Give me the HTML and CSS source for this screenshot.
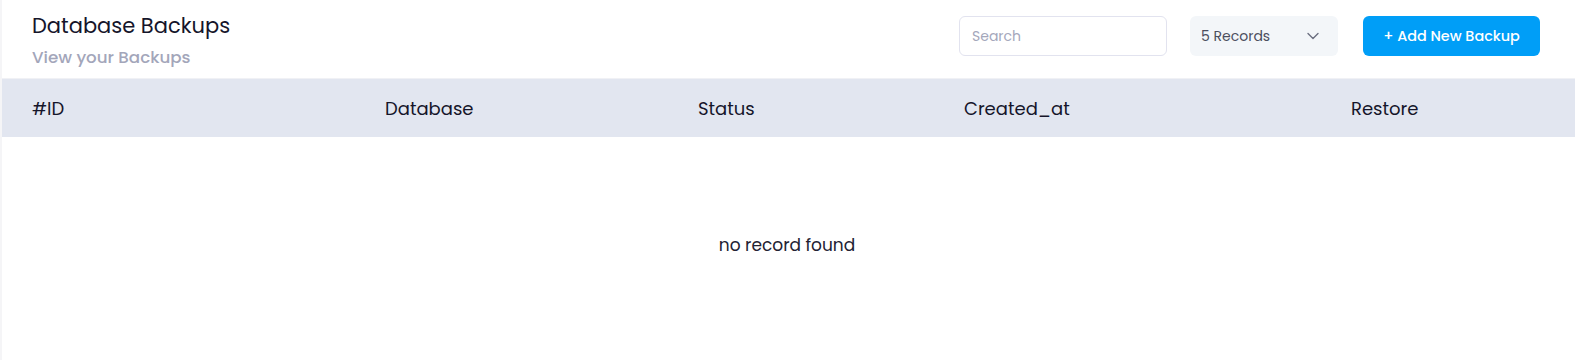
FILE: index.html
```html
<!DOCTYPE html>
<html lang="en">
<head>
  <meta charset="UTF-8">
  <title>Database Backups</title>
  <link rel="stylesheet" href="styles.css">
</head>
<body>
  <div class="card">
    <div class="card-head">
      <div class="titles">
        <h2>Database Backups</h2>
        <p>View your Backups</p>
      </div>
      <div class="tools">
        <input class="search" type="text" placeholder="Search">
        <div class="records">
          <span>5 Records</span>
          <svg width="14" height="14" viewBox="0 0 14 14"><path d="M2 4.5l5 5 5-5" fill="none" stroke="#6b6f80" stroke-width="1.4" stroke-linecap="round" stroke-linejoin="round"/></svg>
        </div>
        <button class="add-btn">+ Add New Backup</button>
      </div>
    </div>

    <div class="table-head">
      <div>#ID</div>
      <div>Database</div>
      <div>Status</div>
      <div>Created_at</div>
      <div>Restore</div>
    </div>
    <div class="empty">no record found</div>
  </div>
</body>
</html>
```

FILE: styles.css
```css
body {
  margin: 0;
  font-family: 'Poppins', 'Open Sans', sans-serif;
  background-color: #fff;
  color: #1b1b2a;
}
.card {
  border-left: 2px solid #f5f5f7;
  min-height: 360px;
}
.card-head {
  display: flex;
  justify-content: space-between;
  align-items: flex-start;
  padding: 11px 35px 0 30px;
  height: 67px;
  border-bottom: 1px solid #f0f1f5;
}
.titles h2 {
  margin: 0;
  font-size: 21px;
  font-weight: 400;
  line-height: 30px;
  color: #15152a;
}
.titles p {
  margin: 3px 0 0;
  font-size: 16.7px;
  font-weight: 500;
  color: #a3a6ba;
}
.tools {
  display: flex;
  align-items: center;
  padding-top: 5px;
}
.search {
  width: 208px;
  height: 40px;
  box-sizing: border-box;
  border: 1px solid #e2e3ef;
  border-radius: 6px;
  padding: 0 12px;
  font-family: inherit;
  font-size: 14px;
  outline: none;
}
.search::placeholder {
  color: #a4a7bb;
}
.records {
  display: flex;
  justify-content: space-between;
  align-items: center;
  width: 148px;
  height: 40px;
  box-sizing: border-box;
  margin-left: 23px;
  padding: 0 18px 0 11px;
  background-color: #f3f6f9;
  border-radius: 6px;
  font-size: 14px;
  color: #4b4e5e;
}
.add-btn {
  margin-left: 25px;
  width: 177px;
  height: 40px;
  border: none;
  border-radius: 6px;
  background-color: #009ef7;
  color: #fff;
  font-family: inherit;
  font-size: 14.4px;
  font-weight: 500;
  cursor: pointer;
}
.table-head {
  display: grid;
  grid-template-columns: 353px 313px 266px 387px 1fr;
  align-items: center;
  height: 58px;
  padding-left: 30px;
  background-color: #e2e6f0;
  font-size: 18px;
  color: #15152a;
}
.empty {
  text-align: center;
  padding-top: 95px;
  padding-right: 3px;
  font-size: 17px;
  color: #222233;
}
```
